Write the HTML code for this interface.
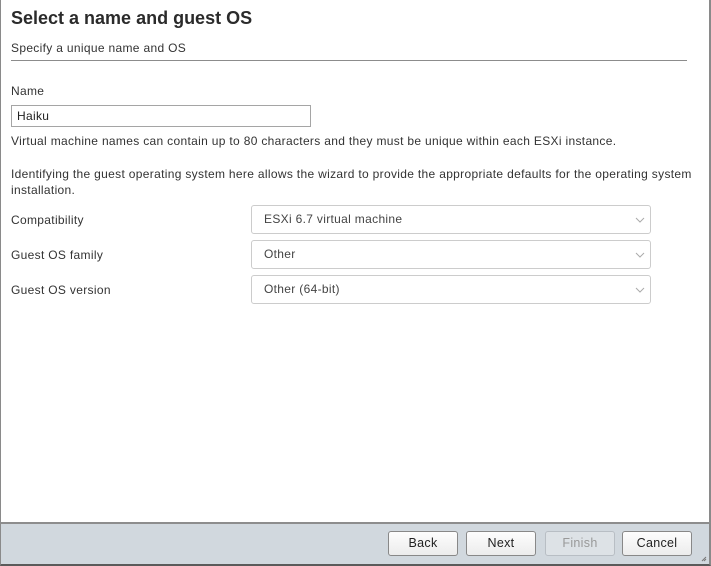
<!DOCTYPE html>
<html><head><meta charset="utf-8"><style>
*{box-sizing:border-box;margin:0;padding:0}
body{width:711px;height:566px;overflow:hidden;background:#fff;font-family:"Liberation Sans",Arial,sans-serif;color:#333;position:relative}
.frame{position:absolute;left:0;top:0;width:711px;height:566px;border-left:1px solid #8a8a8a;border-right:2px solid #8a8a8a}
.abs{position:absolute}
h1{position:absolute;left:11px;top:8px;font-size:18px;font-weight:bold;color:#2b2b2b}
.sub{left:11px;top:41px;font-size:12px;color:#333;letter-spacing:0.32px}
.hr{left:11px;top:60px;width:676px;height:1px;background:#8c8c8c}
.t{font-size:12px;color:#333;letter-spacing:0.32px}
.inp{left:11px;top:105px;width:300px;height:22px;border:1px solid #a5a5a5;font-size:12px;padding:3px 5px;color:#222;letter-spacing:0.32px}
.sel{left:251px;width:400px;height:29px;border:1px solid #ccc;border-radius:3px;font-size:12px;padding:6px 12px;color:#444;background:#fff;letter-spacing:0.32px}
.sel svg{position:absolute;right:5px;top:11px}
.foot{left:0;top:522px;width:711px;height:44px;background:#d1d8de;border-top:2px solid #8d8d8d;border-bottom:2px solid #5a5a5a;border-left:1px solid #8a8a8a;border-right:2px solid #8a8a8a}
.btn{top:531px;width:70px;height:25px;border:1px solid #888;border-radius:3px;background:linear-gradient(#fdfdfd,#ececec);font-size:12.5px;text-align:center;line-height:23px;color:#222;letter-spacing:0.3px}
.dis{border-color:#b8bec4;background:#dde2e6;color:#999}
</style></head><body>
<div class="frame"></div>
<h1>Select a name and guest OS</h1>
<div class="abs sub">Specify a unique name and OS</div>
<div class="abs hr"></div>
<div class="abs t" style="left:11px;top:84px">Name</div>
<div class="abs inp">Haiku</div>
<div class="abs t" style="left:11px;top:134px">Virtual machine names can contain up to 80 characters and they must be unique within each ESXi instance.</div>
<div class="abs t" style="left:11px;top:166px;width:690px;line-height:16px">Identifying the guest operating system here allows the wizard to provide the appropriate defaults for the operating system installation.</div>
<div class="abs t" style="left:11px;top:213px">Compatibility</div>
<div class="abs t" style="left:11px;top:248px">Guest OS family</div>
<div class="abs t" style="left:11px;top:283px">Guest OS version</div>
<div class="abs sel" style="top:205px">ESXi 6.7 virtual machine<svg width="10" height="6"><path d="M1 1L5 5L9 1" fill="none" stroke="#aaa"/></svg></div>
<div class="abs sel" style="top:240px">Other<svg width="10" height="6"><path d="M1 1L5 5L9 1" fill="none" stroke="#aaa"/></svg></div>
<div class="abs sel" style="top:275px">Other (64-bit)<svg width="10" height="6"><path d="M1 1L5 5L9 1" fill="none" stroke="#aaa"/></svg></div>
<div class="abs foot"></div>
<div class="abs btn" style="left:388px">Back</div>
<div class="abs btn" style="left:466px">Next</div>
<div class="abs btn dis" style="left:545px">Finish</div>
<div class="abs btn" style="left:622px">Cancel</div>
<svg class="abs" style="left:701px;top:556px" width="6" height="6"><path d="M5 1L1 5M5 3L3 5" stroke="#777"/></svg>
</body></html>
